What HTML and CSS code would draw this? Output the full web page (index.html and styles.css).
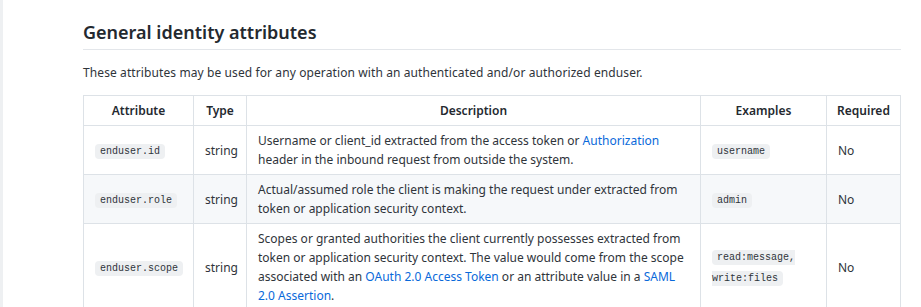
FILE: index.html
```html
<!DOCTYPE html>
<html lang="en">
<head>
<meta charset="utf-8">
<title>General identity attributes</title>
<link rel="stylesheet" href="styles.css">
</head>
<body>
<div class="page">
  <h2 class="title">General identity attributes</h2>
  <p class="intro">These attributes may be used for any operation with an authenticated and/or authorized enduser.</p>
  <table class="attrs">
    <colgroup>
      <col class="c-attr"><col class="c-type"><col class="c-desc"><col class="c-ex"><col class="c-req">
    </colgroup>
    <thead>
      <tr><th>Attribute</th><th>Type</th><th>Description</th><th>Examples</th><th>Required</th></tr>
    </thead>
    <tbody>
      <tr>
        <td><code>enduser.id</code></td>
        <td class="type">string</td>
        <td>Username or client_id extracted from the access token or <a href="#">Authorization</a> header in the inbound request from outside the system.</td>
        <td><code>username</code></td>
        <td>No</td>
      </tr>
      <tr class="alt">
        <td><code>enduser.role</code></td>
        <td class="type">string</td>
        <td>Actual/assumed role the client is making the request under extracted from token or application security context.</td>
        <td><code>admin</code></td>
        <td>No</td>
      </tr>
      <tr>
        <td><code>enduser.scope</code></td>
        <td class="type">string</td>
        <td>Scopes or granted authorities the client currently possesses extracted from token or application security context. The value would come from the scope associated with an <a href="#">OAuth 2.0 Access Token</a> or an attribute value in a <a href="#">SAML 2.0 Assertion</a>.</td>
        <td><code>read:message, write:files</code></td>
        <td>No</td>
      </tr>
    </tbody>
  </table>
</div>
</body>
</html>
```

FILE: styles.css
```css
html, body {
  margin: 0;
  padding: 0;
  background: #ffffff;
}
body {
  border-left: 3px solid #eef0f2;
  min-height: 307px;
  box-sizing: border-box;
  font-family: "Noto Sans", "Open Sans", sans-serif;
  color: #2f343a;
  overflow: hidden;
}
.page {
  padding: 19px 0 0 80px;
  width: 818px;
}
.title {
  margin: 0;
  font-size: 18px;
  font-weight: 600;
  line-height: 26px;
  padding-bottom: 4px;
  border-bottom: 1px solid #e3e6ea;
  color: #24292f;
}
.intro {
  margin: 14px 0 13px;
  font-size: 12px;
  letter-spacing: 0.1px;
  line-height: 18px;
}
.attrs {
  border-collapse: collapse;
  table-layout: fixed;
  width: 817px;
  font-size: 12px;
  line-height: 19px;
}
.c-attr { width: 110px; }
.c-type { width: 53px; }
.c-desc { width: 454px; }
.c-ex { width: 126px; }
.c-req { width: 74px; }
.attrs th, .attrs td {
  border: 1px solid #dde2e7;
  padding: 5px 11px;
  text-align: left;
  vertical-align: middle;
}
.attrs th {
  text-align: center;
  font-weight: 600;
  padding: 5px 8px;
  height: 19px;
  color: #24292f;
}
.attrs td.type { text-align: center; }
.attrs tr.alt td { background: #f6f8fa; }
.attrs tbody tr:first-child td { height: 38px; }
.attrs tr.alt td { height: 38px; }
.attrs a {
  color: #0969da;
  text-decoration: none;
}
.attrs code {
  font-family: "Liberation Mono", "DejaVu Sans Mono", monospace;
  font-size: 10px;
  background: #eef0f2;
  border-radius: 4px;
  padding: 2px 5px;
  color: #2f343a;
}
```
